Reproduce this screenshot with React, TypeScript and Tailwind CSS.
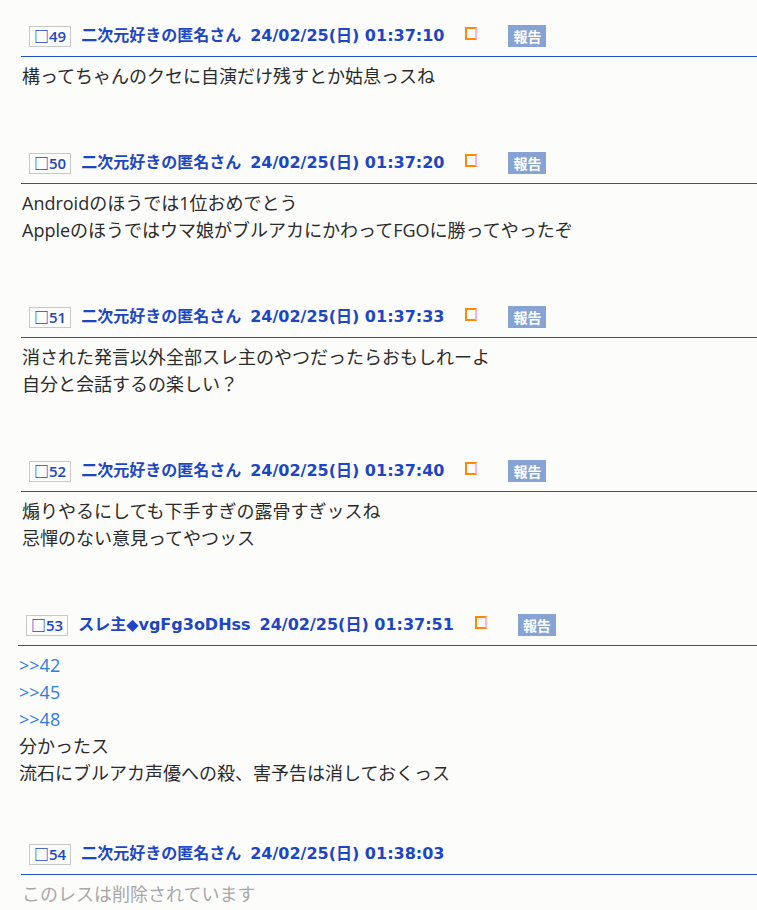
import React from "react";

type Post = {
  no: number;
  name: string;
  date: string;
  lines: { text: string; link?: boolean }[];
  deleted?: boolean;
  shift?: boolean;
};

const posts: Post[] = [
  {
    no: 49,
    name: "二次元好きの匿名さん",
    date: "24/02/25(日) 01:37:10",
    lines: [{ text: "構ってちゃんのクセに自演だけ残すとか姑息っスね" }],
  },
  {
    no: 50,
    name: "二次元好きの匿名さん",
    date: "24/02/25(日) 01:37:20",
    lines: [
      { text: "Androidのほうでは1位おめでとう" },
      { text: "Appleのほうではウマ娘がブルアカにかわってFGOに勝ってやったぞ" },
    ],
  },
  {
    no: 51,
    name: "二次元好きの匿名さん",
    date: "24/02/25(日) 01:37:33",
    lines: [
      { text: "消された発言以外全部スレ主のやつだったらおもしれーよ" },
      { text: "自分と会話するの楽しい？" },
    ],
  },
  {
    no: 52,
    name: "二次元好きの匿名さん",
    date: "24/02/25(日) 01:37:40",
    lines: [
      { text: "煽りやるにしても下手すぎの露骨すぎッスね" },
      { text: "忌憚のない意見ってやつッス" },
    ],
  },
  {
    no: 53,
    name: "スレ主◆vgFg3oDHss",
    date: "24/02/25(日) 01:37:51",
    shift: true,
    lines: [
      { text: ">>42", link: true },
      { text: ">>45", link: true },
      { text: ">>48", link: true },
      { text: "分かったス" },
      { text: "流石にブルアカ声優への殺、害予告は消しておくっス" },
    ],
  },
  {
    no: 54,
    name: "二次元好きの匿名さん",
    date: "24/02/25(日) 01:38:03",
    deleted: true,
    lines: [{ text: "このレスは削除されています" }],
  },
];

function PostItem({ p }: { p: Post }) {
  return (
    <div className={p.shift ? "ml-[18px] mb-[56px]" : "ml-[21px] mb-[62px]"}>
      <div className="flex items-center pl-2 pb-[9px] border-b border-[#1f4fcc] text-[#1c46c6] h-[32px] font-['DejaVu_Sans','Noto_Sans_CJK_JP',sans-serif]">
        <span className="border border-[#c8c8c8] px-[4px] h-[21px] leading-[19px] text-[15px] font-['Open_Sans','Noto_Sans_CJK_JP',sans-serif] font-semibold">
          □{p.no}
        </span>
        <span className="ml-[10px] text-[16px] font-bold">{p.name}</span>
        <span className="ml-[9px] text-[16px] font-bold">{p.date}</span>
        {!p.deleted && (
          <>
            <span className="ml-[21px] self-start mt-[2px] w-[12px] h-[13px] border-2 border-[#ff8a00] border-r-[#ffb0d8]" />
            <span className="ml-[31px] bg-[#87a3d3] text-white text-[14px] font-bold px-[5px] h-[22px] leading-[22px] font-['Noto_Sans_CJK_JP',sans-serif]">
              報告
            </span>
          </>
        )}
      </div>
      <div className="pt-[6px] pl-[1px] text-[18px] leading-[27px]">
        {p.lines.map((l, i) => (
          <div
            key={i}
            className={
              p.deleted ? "text-[#a8a8a8]" : l.link ? "text-[#2f7ae8]" : "text-[#2b2b2b]"
            }
          >
            {l.text}
          </div>
        ))}
      </div>
    </div>
  );
}

export default function App() {
  return (
    <div className="min-h-[910px] w-[757px] bg-[#fcfcfb] pt-[25px] overflow-hidden font-['Open_Sans','Noto_Sans_CJK_JP',sans-serif]">
      {posts.map((p) => (
        <PostItem key={p.no} p={p} />
      ))}
    </div>
  );
}
